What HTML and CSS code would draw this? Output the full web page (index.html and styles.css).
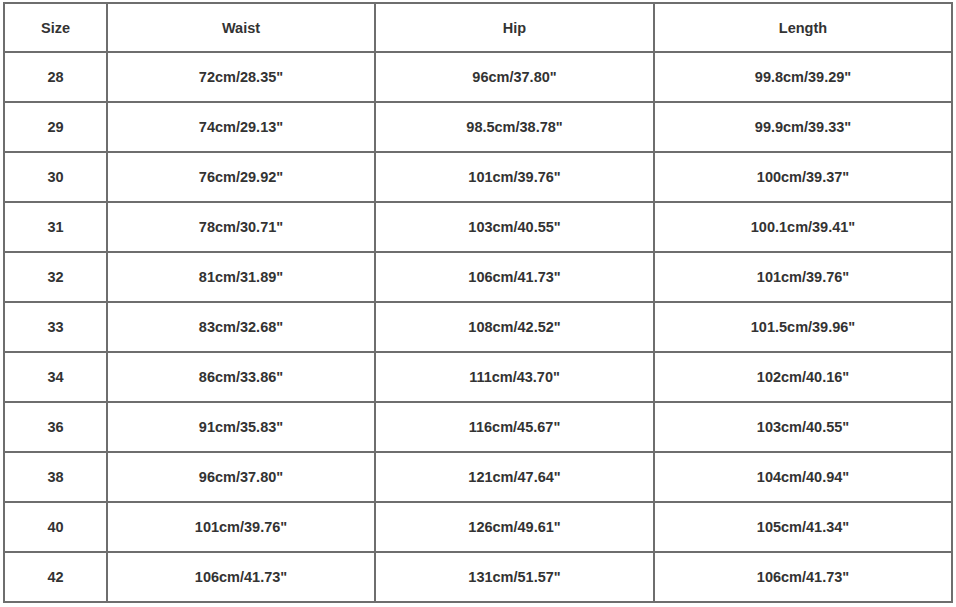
FILE: index.html
```html
<!DOCTYPE html>
<html>
<head>
<meta charset="utf-8">
<link rel="stylesheet" href="styles.css">
</head>
<body>
<table class="size-table">
  <colgroup>
    <col class="c1"><col class="c2"><col class="c3"><col class="c4">
  </colgroup>
  <tr class="head"><td>Size</td><td>Waist</td><td>Hip</td><td>Length</td></tr>
  <tr><td>28</td><td>72cm/28.35"</td><td>96cm/37.80"</td><td>99.8cm/39.29"</td></tr>
  <tr><td>29</td><td>74cm/29.13"</td><td>98.5cm/38.78"</td><td>99.9cm/39.33"</td></tr>
  <tr><td>30</td><td>76cm/29.92"</td><td>101cm/39.76"</td><td>100cm/39.37"</td></tr>
  <tr><td>31</td><td>78cm/30.71"</td><td>103cm/40.55"</td><td>100.1cm/39.41"</td></tr>
  <tr><td>32</td><td>81cm/31.89"</td><td>106cm/41.73"</td><td>101cm/39.76"</td></tr>
  <tr><td>33</td><td>83cm/32.68"</td><td>108cm/42.52"</td><td>101.5cm/39.96"</td></tr>
  <tr><td>34</td><td>86cm/33.86"</td><td>111cm/43.70"</td><td>102cm/40.16"</td></tr>
  <tr><td>36</td><td>91cm/35.83"</td><td>116cm/45.67"</td><td>103cm/40.55"</td></tr>
  <tr><td>38</td><td>96cm/37.80"</td><td>121cm/47.64"</td><td>104cm/40.94"</td></tr>
  <tr><td>40</td><td>101cm/39.76"</td><td>126cm/49.61"</td><td>105cm/41.34"</td></tr>
  <tr><td>42</td><td>106cm/41.73"</td><td>131cm/51.57"</td><td>106cm/41.73"</td></tr>
</table>
</body>
</html>
```
FILE: styles.css
```css
html, body {
  margin: 0;
  padding: 0;
  background: #ffffff;
}
body {
  padding: 2px 0 0 3px;
}
.size-table {
  border-collapse: collapse;
  table-layout: fixed;
  width: 950px;
  font-family: "Liberation Sans", Arial, sans-serif;
  font-weight: bold;
  font-size: 14.5px;
  color: #333333;
}
.c1 { width: 103px; }
.c2 { width: 268px; }
.c3 { width: 279px; }
.c4 { width: 298px; }
.size-table tr {
  height: 50px;
}
.size-table tr.head {
  height: 49px;
}
.size-table td {
  border: 2px solid #6e6e6e;
  text-align: center;
  vertical-align: middle;
  padding: 0;
}
```
